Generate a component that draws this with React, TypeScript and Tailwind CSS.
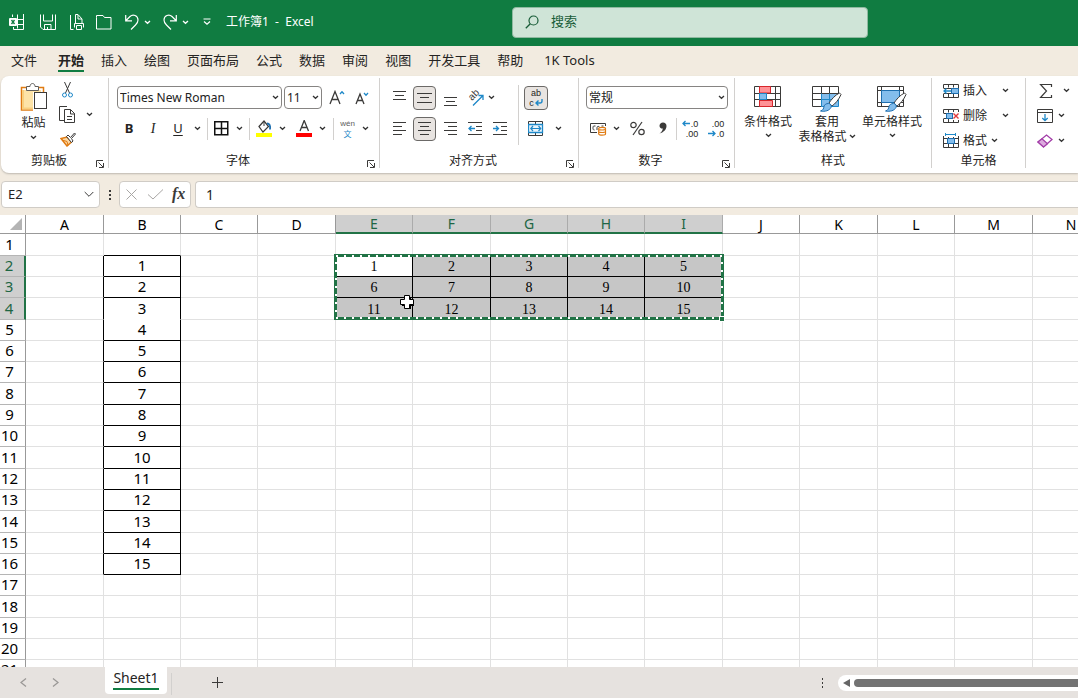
import clsx from "clsx";
import { FC, ReactNode, useState } from "react";

interface IconProps {
  w: number;
  h: number;
  children: ReactNode;
  className?: string;
}

const Icon: FC<IconProps> = ({ w, h, children, className }) => (
  <svg
    width={w}
    height={h}
    viewBox={`0 0 ${w} ${h}`}
    fill="none"
    stroke="#3b3a39"
    className={clsx("shrink-0", className)}
    aria-hidden="true"
  >
    {children}
  </svg>
);

const Chevron: FC<{ color?: string }> = ({ color = "#333" }) => (
  <Icon w={7} h={5}>
    <path d="M1 1l2.5 2.3L6 1" stroke={color} strokeWidth="1.3" />
  </Icon>
);

interface ToolProps {
  label: string;
  className?: string;
  active?: boolean;
  children: ReactNode;
}

const Tool: FC<ToolProps> = ({ label, className, active, children }) => (
  <button
    type="button"
    aria-label={label}
    className={clsx(
      "flex shrink-0 items-center justify-center",
      active && "h-6 rounded border border-[#6b6967] bg-[#e8e4e1]",
      className,
    )}
  >
    {children}
  </button>
);

const Sep: FC<{ className?: string }> = ({ className }) => (
  <div className={clsx("h-[22px] w-px shrink-0 bg-[#d2d0ce]", className)} />
);

const Launcher: FC<{ label: string }> = ({ label }) => (
  <Tool label={label} className="mr-1 self-end">
    <Icon w={8} h={8}>
      <path d="M.5 7V.5H7M2.5 2.5l4.5 4.5M7.5 3v4.5H3" />
    </Icon>
  </Tool>
);

interface GroupProps {
  title: string;
  className: string;
  launcher?: boolean;
  children: ReactNode;
}

const Group: FC<GroupProps> = ({ title, className, launcher, children }) => (
  <section
    aria-label={title}
    className={clsx(
      "flex h-[90px] shrink-0 flex-col border-r border-[#d2d0ce]",
      className,
    )}
  >
    <div className="h-[76px] shrink-0">{children}</div>
    <div className="flex h-[14px] items-center">
      <span className="flex-1 text-center leading-4">{title}</span>
      {launcher && <Launcher label={`${title}设置`} />}
    </div>
  </section>
);

const Combo: FC<{ label: string; value: string; className: string }> = ({
  label,
  value,
  className,
}) => (
  <div className={clsx("relative h-[23px]", className)}>
    <select
      aria-label={label}
      defaultValue={value}
      className="h-full w-full appearance-none rounded border border-[#868482] bg-white pl-0.5 text-xs text-[#222]"
    >
      <option>{value}</option>
    </select>
    <div className="pointer-events-none absolute inset-y-0 right-[3px] flex items-center">
      <Chevron />
    </div>
  </div>
);

const lines = {
  level: "M0 .5h13M2 4.5h9M0 8.5h13",
  left: "M0 .5h13M0 4.5h9M0 8.5h13M0 12.5h9",
  center: "M0 .5h13M2 4.5h9M0 8.5h13M2 12.5h9",
  right: "M0 .5h13M4 4.5h9M0 8.5h13M4 12.5h9",
};

const TitleBar: FC = () => (
  <header className="flex h-[46px] shrink-0 items-center bg-[#107c41] pb-0.5 text-xs text-white">
    <div className="flex w-[47.5%] shrink-0 items-center pl-[9px]">
      <Tool label="Excel">
        <Icon w={15} h={16} className="stroke-white">
          <path d="M3.5 3V.5M8.5 .5v14M14.5 0v15.5h-10V13M3 5.5h11M3 10.5h11" />
          <rect x="0" y="4" width="8" height="8" rx="1" fill="#fff" stroke="none" />
          <path d="M2.5 6l3 4M5.5 6l-3 4" stroke="#107c41" strokeWidth="1.3" />
        </Icon>
      </Tool>
      <Tool label="保存" className="ml-4">
        <Icon w={16} h={16} className="stroke-white">
          <path d="M.5.5V13l2.5 2.5h12.5V.5M3.5.5v6.5h9V.5M4.5 15.5V10.5h6.5v5M7.5 15v-2" />
        </Icon>
      </Tool>
      <Tool label="打印预览" className="ml-[14px]">
        <Icon w={14} h={16} className="stroke-white">
          <path d="M.5 1v14.5h3M5.5 9V.5h2.5L12 5v4M8 1v4h4" />
          <path d="M4.5 13.5v-4h9v4M6.5 11.5h5v4h-5z" />
        </Icon>
      </Tool>
      <Tool label="打开" className="ml-3">
        <Icon w={16} h={15} className="stroke-white">
          <path d="M.5 2.5V14h14.500V2.500H8.500L7 .5H.5z" />
        </Icon>
      </Tool>
      <Tool label="撤消" className="ml-[13px]">
        <Icon w={14} h={16} className="stroke-white">
          <path d="M.7 1v5.8H7M1 6.5L5 2.500C8-.5 13 1.500 13 6c0 2-1 3.500-2.500 5L6 15.500" strokeWidth="1.2" />
        </Icon>
      </Tool>
      <Tool label="撤消列表" className="ml-[5px]">
        <Chevron color="#fff" />
      </Tool>
      <Tool label="恢复" className="ml-3">
        <Icon w={14} h={16} className="stroke-white">
          <path d="M13.300 1v5.800H7M13 6.500L9 2.500C6-.5 1 1.500 1 6c0 2 1 3.500 2.500 5L8 15.500" strokeWidth="1.2" />
        </Icon>
      </Tool>
      <Tool label="恢复列表" className="ml-[5px]">
        <Chevron color="#fff" />
      </Tool>
      <Tool label="自定义快速访问工具栏" className="ml-[14px]">
        <Icon w={8} h={8} className="stroke-white">
          <path d="M.5 1h7M1 3.500L4 6.300l3-2.800" strokeWidth="1.2" />
        </Icon>
      </Tool>
      <h1 className="ml-[15px] whitespace-pre">工作簿1{"  -  "}Excel</h1>
    </div>
    <label className="flex h-[31px] w-[33%] items-center gap-3 rounded-sm border border-[#8fb9a0] bg-[#cfe4d7] px-3 text-[#185c37]">
      <Icon w={14} h={14} className="stroke-[#185c37]">
        <circle cx="8.500" cy="5.500" r="4.500" strokeWidth="1.2" />
        <path d="M5.300 8.700L.8 13.200" strokeWidth="1.3" />
      </Icon>
      <input
        aria-label="搜索"
        placeholder="搜索"
        className="min-w-0 flex-1 text-[13px] placeholder:text-[#185c37] outline-none"
      />
    </label>
  </header>
);

const tabs = [
  "文件",
  "开始",
  "插入",
  "绘图",
  "页面布局",
  "公式",
  "数据",
  "审阅",
  "视图",
  "开发工具",
  "帮助",
  "1K Tools",
];

const Tabs: FC = () => {
  const [current, setCurrent] = useState<string>("开始");

  return (
    <nav className="flex h-[30px] shrink-0 gap-[17px] pl-[11px] text-[13px]">
      {tabs.map((tab) => (
        <button
          key={tab}
          type="button"
          onClick={() => setCurrent(tab)}
          className={clsx(
            "h-[26px] shrink-0 border-b-2 pt-1 leading-5 first:mr-1 last:ml-1",
            tab === current
              ? "border-[#107c41] font-bold"
              : "border-transparent",
          )}
        >
          {tab}
        </button>
      ))}
    </nav>
  );
};

const Clipboard: FC = () => (
  <Group title="剪贴板" className="w-[107px]" launcher>
    <div className="flex">
      <button type="button" className="flex w-[57px] flex-col items-center pt-[5px] pl-1.5">
        <Icon w={28} h={30}>
          <path d="M7 4.500H1.500v22.500H13M19 4.500h4.500V9" stroke="#e07b12" strokeWidth="1.5" />
          <path d="M3.500 7v18.500H13V9h8V7z" fill="#fde3a7" stroke="none" />
          <path d="M3 7v18.500h10" stroke="#f9cf7e" strokeWidth="2" />
          <path d="M6.500 7.500v-4h3.500c0-4 5-4 5 0h3.500v4z" fill="#fff" stroke="#605e5c" />
          <rect x="14.500" y="9.500" width="12" height="16" fill="#fff" />
        </Icon>
        <span className="mt-0.5 mb-1 leading-4">粘贴</span>
        <Chevron />
      </button>
      <div className="flex flex-col">
        <Tool label="剪切" className="h-6 w-[18px]">
          <Icon w={12} h={16}>
            <path d="M2.500 0l5 11M8.500 0l-5 11" />
            <circle cx="2.500" cy="13" r="2" stroke="#1e88c8" />
            <circle cx="8.500" cy="13" r="2" stroke="#1e88c8" />
          </Icon>
        </Tool>
        <div className="flex h-[25px] items-center">
          <Tool label="复制">
            <Icon w={17} h={17}>
              <path d="M5 14.500H.5V.5H8M5.500 3.500h6l4 4v9h-10zM11.500 3.500v4.500H16M8 10.500h5M8 13.500h5" />
            </Icon>
          </Tool>
          <Tool label="复制选项" className="ml-2.5">
            <Chevron />
          </Tool>
        </div>
        <Tool label="格式刷" className="h-[25px] w-[17px]">
          <Icon w={16} h={15}>
            <path d="M1 6.500l6 7.500 4.500-4-4.500-5z" fill="#fbd9a8" stroke="#e07b12" strokeWidth="1.5" />
            <path d="M2 8l5 1.500 1 4" stroke="#e07b12" />
            <path d="M6.500 4.500L8 3l2.500 2.500L14.500 1l1 1-4 4.500L13 9l-1.500 1.500z" fill="#fff" />
          </Icon>
        </Tool>
      </div>
    </div>
  </Group>
);

const FontGroup: FC = () => (
  <Group title="字体" className="w-[271px]" launcher>
    <div className="flex h-[35px] items-center pt-1 pl-2">
      <Combo label="字体" value="Times New Roman" className="w-[165px]" />
      <Combo label="字号" value="11" className="ml-0.5 w-[38px]" />
      <Tool label="增大字号" className="ml-[7px]">
        <Icon w={16} h={15}>
          <path d="M1 14L6 1.500 11 14M2.800 9.500h6.500" strokeWidth="1.3" />
          <path d="M11 4l2-2.300L15 4" stroke="#1e88c8" strokeWidth="1.3" />
        </Icon>
      </Tool>
      <Tool label="减小字号" className="ml-2.5 pt-0.5">
        <Icon w={14} h={13}>
          <path d="M1 12L5 2l4 10M2.500 8.500h5" strokeWidth="1.3" />
          <path d="M9 1l2 2.200L13 1" stroke="#1e88c8" strokeWidth="1.3" />
        </Icon>
      </Tool>
    </div>
    <div className="flex h-[31px] items-center pl-2">
      <Tool label="加粗" className="w-6 text-[13px] font-bold">
        B
      </Tool>
      <Tool label="倾斜" className="w-6 font-['Liberation_Serif',serif] text-sm italic">
        I
      </Tool>
      <Tool label="下划线" className="w-[26px] text-[13px] underline underline-offset-2">
        U
      </Tool>
      <Tool label="下划线选项" className="w-3">
        <Chevron />
      </Tool>
      <Sep className="ml-1" />
      <Tool label="边框" className="ml-[6px]">
        <Icon w={15} h={15} className="stroke-[#111]">
          <path d="M.75.75h13v13h-13zM7.500.5v13.500M.5 7.500H14" strokeWidth="1.5" />
        </Icon>
      </Tool>
      <Tool label="边框选项" className="ml-0.5 w-4">
        <Chevron />
      </Tool>
      <Sep className="ml-0.5" />
      <Tool label="填充颜色" className="w-[27px]">
        <Icon w={16} h={17}>
          <path d="M3 6.500L8 1l4.500 5.500L7 12z" strokeWidth="1.2" />
          <path d="M8 1v5" />
          <path d="M11 3.500c2.500 0 3.500 2 3 6" stroke="#1e6fb0" strokeWidth="1.8" />
          <path d="M0 15h16" stroke="#ff0" strokeWidth="4" />
        </Icon>
      </Tool>
      <Tool label="填充颜色选项" className="w-2.5">
        <Chevron />
      </Tool>
      <Tool label="字体颜色" className="ml-[9px]">
        <Icon w={16} h={17}>
          <path d="M4 11L8.200.5 12.500 11M5.500 7.500h5.500" strokeWidth="1.3" />
          <path d="M0 15h16" stroke="#f00" strokeWidth="4" />
        </Icon>
      </Tool>
      <Tool label="字体颜色选项" className="ml-[5px] w-2.5">
        <Chevron />
      </Tool>
      <Sep className="ml-1.5" />
      <Tool
        label="拼音"
        className="w-[27px] flex-col font-['Liberation_Sans','Noto_Sans_CJK_SC',sans-serif] text-[8px] text-[#605e5c]"
      >
        <span className="leading-[11px]">wén</span>
        <span className="leading-[11px] text-[#1e88c8]">文</span>
      </Tool>
      <Tool label="拼音选项" className="w-2">
        <Chevron />
      </Tool>
    </div>
  </Group>
);

const AlignGroup: FC = () => (
  <Group title="对齐方式" className="w-[199px]" launcher>
    <div className="flex pt-1">
      <div className="flex w-[133px] flex-col pl-1.5">
        <div className="flex h-[31px] items-center">
          <Tool label="顶端对齐" className="w-[27px] pb-1">
            <Icon w={13} h={10}>
              <path d={lines.level} />
            </Icon>
          </Tool>
          <Tool label="垂直居中" className="w-[23px]" active>
            <Icon w={15} h={10}>
              <path d="M0 .5h15M3 4.500h9M0 9.500h15" />
            </Icon>
          </Tool>
          <Tool label="底端对齐" className="w-7 pt-2">
            <Icon w={13} h={10}>
              <path d={lines.level} />
            </Icon>
          </Tool>
          <Tool label="方向" className="w-[22px]">
            <Icon w={18} h={18}>
              <text
                x="6"
                y="12"
                fontSize="10"
                fill="#3b3a39"
                stroke="none"
                transform="rotate(-45 6 12)"
                className="font-['Liberation_Sans',sans-serif]"
              >
                ab
              </text>
              <path d="M7 16.500L17 6.500M12.500 6.500H17V11" stroke="#1e88c8" strokeWidth="1.3" />
            </Icon>
          </Tool>
          <Tool label="方向选项" className="w-2.5">
            <Chevron />
          </Tool>
        </div>
        <div className="flex h-[31px] items-center">
          <Tool label="左对齐" className="w-[27px]">
            <Icon w={13} h={13}>
              <path d={lines.left} />
            </Icon>
          </Tool>
          <Tool label="居中" className="w-[23px]" active>
            <Icon w={13} h={13}>
              <path d={lines.center} />
            </Icon>
          </Tool>
          <Tool label="右对齐" className="w-7">
            <Icon w={13} h={13}>
              <path d={lines.right} />
            </Icon>
          </Tool>
          <Tool label="减少缩进量" className="w-[22px]">
            <Icon w={14} h={13}>
              <path d="M0 .5h14M8 4.500h6M8 8.500h6M0 12.500h14" />
              <path d="M7 6.500H1M3.500 4L1 6.500 3.500 9" stroke="#1e88c8" strokeWidth="1.3" />
            </Icon>
          </Tool>
          <Tool label="增加缩进量" className="w-7">
            <Icon w={14} h={13}>
              <path d="M0 .5h14M8 4.500h6M8 8.500h6M0 12.500h14" />
              <path d="M0 6.500h5.500M3 4l2.500 2.500L3 9" stroke="#1e88c8" strokeWidth="1.3" />
            </Icon>
          </Tool>
        </div>
      </div>
      <div className="mt-[3px] ml-[5px] h-[60px] w-px bg-[#d2d0ce]" />
      <div className="ml-[5px]">
        <div className="flex h-[31px] items-center">
          <Tool
            label="自动换行"
            className="w-6 flex-col font-['Liberation_Sans',sans-serif] text-[9px] leading-[10px]"
            active
          >
            <span>ab</span>
            <span className="flex items-center gap-px">
              c
              <Icon w={8} h={8}>
                <path d="M7 0v2c0 1.500-1 2-2 2H1M3.500 1.500L1 4l2.500 2.500" stroke="#1e88c8" strokeWidth="1.4" />
              </Icon>
            </span>
          </Tool>
        </div>
        <div className="flex h-[31px] items-center">
          <Tool label="合并后居中" className="w-6">
            <Icon w={16} h={16}>
              <path d="M.5.5h14v14H.5zM7.500.5v3M7.500 12v3" />
              <path d="M.5 3.500h14v8H.5z" fill="#eaf5fc" stroke="#1e88c8" strokeWidth="1.3" />
              <path d="M3 7.500h9.500M5 5L2.800 7.500 5 10M10.500 5l2.200 2.500L10.500 10" stroke="#1e88c8" strokeWidth="1.2" />
            </Icon>
          </Tool>
          <Tool label="合并选项" className="w-5">
            <Chevron />
          </Tool>
        </div>
      </div>
    </div>
  </Group>
);

const NumberGroup: FC = () => (
  <Group title="数字" className="w-[156px]" launcher>
    <div className="flex h-[35px] items-center pt-1 pl-[7px]">
      <Combo label="数字格式" value="常规" className="w-[142px]" />
    </div>
    <div className="flex h-[31px] items-center pl-[7px]">
      <Tool label="会计数字格式" className="w-6">
        <Icon w={17} h={14}>
          <path d="M7 10.500H.5v-9h15V4M5.500 4H4C3 4 3 5 3 6s0 2 1.500 2M7 8V5.500C7 4 9.500 4 9.500 5.500M11.500 4h2" />
          <path d="M8.700 6.500c0-1.500 6.800-1.500 6.800 0v5.500c0 1.500-6.800 1.500-6.800 0zM8.700 7c0 1.300 6.800 1.300 6.800 0M8.700 9.500c0 1.300 6.800 1.300 6.800 0" fill="#fff" stroke="#e07b12" strokeWidth="1.2" />
        </Icon>
      </Tool>
      <Tool label="会计数字格式选项" className="w-3">
        <Chevron />
      </Tool>
      <Tool label="百分比样式" className="w-[30px]">
        <Icon w={15} h={15}>
          <circle cx="3.500" cy="4" r="2.700" strokeWidth="1.2" />
          <circle cx="11.500" cy="11" r="2.700" strokeWidth="1.2" />
          <path d="M12 1L3 14" strokeWidth="1.2" />
        </Icon>
      </Tool>
      <Tool label="千位分隔样式" className="w-[22px]">
        <Icon w={8} h={13}>
          <path d="M4 .5C2 .5.500 2 .500 3.700c0 2 1.500 3 3.300 2.800-.2 2-1.300 3.800-3.300 5 4-1 7-4 7-7.500 0-2-1.500-3.500-3.500-3.500z" fill="#3b3a39" stroke="none" />
        </Icon>
      </Tool>
      <Sep className="ml-0.5" />
      <Tool
        label="增加小数位数"
        className="w-[26px] font-['Liberation_Sans',sans-serif] text-[9px] leading-[10px]"
      >
        <span className="flex flex-col items-end">
          <span className="flex items-center gap-px">
            <Icon w={8} h={7}>
              <path d="M8 3.500H1M3.500 1L1 3.500 3.500 6" stroke="#1e88c8" strokeWidth="1.3" />
            </Icon>
            .0
          </span>
          <span>.00</span>
        </span>
      </Tool>
      <Tool
        label="减少小数位数"
        className="w-[26px] font-['Liberation_Sans',sans-serif] text-[9px] leading-[10px]"
      >
        <span className="flex flex-col items-end">
          <span>.00</span>
          <span className="flex items-center gap-px">
            <Icon w={8} h={7}>
              <path d="M0 3.500h7M4.500 1L7 3.500 4.500 6" stroke="#1e88c8" strokeWidth="1.3" />
            </Icon>
            .0
          </span>
        </span>
      </Tool>
    </div>
  </Group>
);

const Brush: FC = () => (
  <>
    <path d="M27.500 7l1.500 1.500c-2 5-6 9.500-9 11.500l-3-3c2-3 6-8 10.500-10z" fill="#fff" />
    <path d="M16.500 17.500c2 0 3.500 2 2.500 4-1.500 3-6 4.500-10.500 3.500 3-1 3-2.500 3.500-4.500s2-3 4.500-3z" fill="#83bdec" stroke="#1e6fb0" />
  </>
);

const StyleGroup: FC = () => (
  <Group title="样式" className="w-[197px]">
    <div className="flex items-start pt-2 pl-[5px] leading-[15px]">
      <button type="button" className="flex w-14 flex-col items-center">
        <Icon w={28} h={28}>
          <path d="M.5.5h26v20H.5zM5.500.5v20M21.500.5v20M.5 7.500h26M.5 13.500h26M12.500 7v7" />
          <path d="M5.500.5h11v6.500h-11zM5.500 14.500h13v6h-13z" fill="#ff9296" stroke="#d8262c" />
          <path d="M5.500 7.500h7v6h-7z" fill="#83bdec" stroke="#1e88c8" />
        </Icon>
        <span>条件格式</span>
        <span className="flex h-[13px] items-center"><Chevron /></span>
      </button>
      <button type="button" className="flex w-[62px] flex-col items-center">
        <Icon w={30} h={28}>
          <path d="M9 7h18v13.500H9z" fill="#83bdec" stroke="none" />
          <path d="M26.500 8V.5H.5v20H9M9.500.5v20M17.500.5v20M.5 7.500h26M.5 13.500h26" />
          <path d="M9.500 7.500v13h17v-13M17.500 7.500v13M9.500 13.500h17" stroke="#1e88c8" />
          <Brush />
        </Icon>
        <span>套用</span>
        <span className="flex items-center gap-0.5 whitespace-nowrap">表格格式 <Chevron /></span>
      </button>
      <button type="button" className="flex w-[68px] flex-col items-center whitespace-nowrap">
        <Icon w={30} h={28}>
          <path d="M.5.5h26v20H.5zM4.500.5v20M22.500.5v20M.5 4.500h26M.5 16.500h26" />
          <path d="M4.500 4.500h18v12h-18z" fill="#83bdec" stroke="#1e6fb0" />
          <Brush />
        </Icon>
        <span>单元格样式</span>
        <span className="flex h-[13px] items-center"><Chevron /></span>
      </button>
    </div>
  </Group>
);

const cellGrid = "M.5 4V.5h15v13H.5V10M5.500.5v3M10.500.5v3M5.500 10v3.500M10.500 10v3.500M.5 4.500h15M.5 9.500h15";

const CellsGroup: FC = () => (
  <Group title="单元格" className="w-[94px]">
    <div className="flex flex-col pl-[11px]">
      <button type="button" className="flex h-[25px] items-center gap-1">
        <Icon w={16} h={14}>
          <path d={cellGrid} />
          <path d="M8.500 4.500h7v5h-7z" fill="#83bdec" stroke="#1e6fb0" />
          <path d="M0 5h8v4H0z" fill="#fff" stroke="none" />
          <path d="M8 7H1M3.500 4.500L1 7l2.500 2.500" stroke="#1e88c8" strokeWidth="1.3" />
        </Icon>
        <span className="mr-[11px]">插入</span>
        <Chevron />
      </button>
      <button type="button" className="flex h-[25px] items-center gap-1">
        <Icon w={16} h={14}>
          <path d={cellGrid} />
          <path d="M3.500 4.500h6v5h-6z" fill="#83bdec" stroke="#1e6fb0" />
          <path d="M10 3h6v8h-6z" fill="#fff" stroke="none" />
          <path d="M10.500 4.500l5 5M15.500 4.500l-5 5" stroke="#e03a3e" strokeWidth="1.4" />
        </Icon>
        <span className="mr-[11px]">删除</span>
        <Chevron />
      </button>
      <button type="button" className="flex h-[25px] items-center gap-1">
        <Icon w={16} h={15}>
          <path d="M.5 3v11.500h15V3M5.500 4v10.500M10.500 4v10.500M.5 5.500h15M.5 10.500h15" />
          <path d="M4.500 5.500h7v5h-7z" fill="#83bdec" stroke="#1e6fb0" />
          <path d="M3 1.500h10M2.500 0v3M12.500 0v3" stroke="#1e88c8" />
        </Icon>
        <span>格式</span>
        <Chevron />
      </button>
    </div>
  </Group>
);

const EditTools: FC = () => (
  <div className="flex shrink-0 flex-col pl-[11px]">
    <div className="flex h-[25px] items-center">
      <Tool label="自动求和" className="ml-0.5">
        <Icon w={14} h={14}>
          <path d="M12.500 3V.5h-11L7.500 7l-6 6.500h11V11" strokeWidth="1.2" />
        </Icon>
      </Tool>
      <Tool label="求和选项" className="ml-2.5">
        <Chevron />
      </Tool>
    </div>
    <div className="flex h-[25px] items-center">
      <Tool label="填充">
        <Icon w={16} h={14}>
          <path d="M.5.5h15v13H.5zM.5 3.500h15" />
          <path d="M8 5v6.500M5.300 9L8 11.700 10.700 9" stroke="#1e88c8" strokeWidth="1.3" />
        </Icon>
      </Tool>
      <Tool label="填充选项" className="ml-[5px]">
        <Chevron />
      </Tool>
    </div>
    <div className="flex h-[25px] items-center">
      <Tool label="清除">
        <Icon w={16} h={14}>
          <path d="M1 8l8.500-7L15 5.500 6.500 13z" fill="#fff" stroke="#a33ea8" strokeWidth="1.3" />
          <path d="M1 8l4-3.200 5.500 5L6.500 13z" fill="#dcaade" stroke="#a33ea8" strokeWidth="1.3" />
        </Icon>
      </Tool>
      <Tool label="清除选项" className="ml-[5px]">
        <Chevron />
      </Tool>
    </div>
  </div>
);

const Ribbon: FC = () => (
  <div className="ml-px flex h-[97px] shrink-0 overflow-hidden rounded-l-lg bg-white pt-0.5 pl-px text-xs shadow-[0_1px_2px_#bdb8b0]">
    <Clipboard />
    <FontGroup />
    <AlignGroup />
    <NumberGroup />
    <StyleGroup />
    <CellsGroup />
    <EditTools />
  </div>
);

const FormulaBar: FC = () => (
  <div className="mt-2 flex h-[27px] shrink-0 pl-px text-[13px]">
    <div className="flex w-[99px] items-center rounded border border-[#d0ccc6] bg-white pr-[5px]">
      <input aria-label="名称框" defaultValue="E2" className="min-w-0 flex-1 pl-1.5 outline-none" />
      <Icon w={10} h={7}>
        <path d="M.7 1L5 5.300 9.300 1" />
      </Icon>
    </div>
    <div className="flex w-[19px] items-center justify-center">
      <Icon w={2} h={10}>
        <path d="M1 0v2M1 4v2M1 8v2" strokeWidth="2" />
      </Icon>
    </div>
    <div className="flex w-[72px] items-center rounded border border-[#d0ccc6] bg-white pl-1.5">
      <Tool label="取消">
        <Icon w={11} h={11} className="stroke-[#a8a6a4]">
          <path d="M.5.5l10 10M10.500.5l-10 10" />
        </Icon>
      </Tool>
      <Tool label="输入" className="ml-2.5">
        <Icon w={17} h={11} className="stroke-[#a8a6a4]">
          <path d="M1 5.500L6 10 16 .5" />
        </Icon>
      </Tool>
      <Tool
        label="插入函数"
        className="ml-2 pb-0.5 font-['Liberation_Serif',serif] text-base leading-5 font-bold text-[#3b3a39] italic"
      >
        fx
      </Tool>
    </div>
    <input
      aria-label="编辑栏"
      defaultValue="1"
      className="ml-1 min-w-0 flex-1 rounded-l border border-r-0 border-[#d0ccc6] bg-white pl-[10px] text-sm outline-none"
    />
  </div>
);

const columns = "ABCDEFGHIJKLMN".split("");
const wideColumns = "ADFIKM";
const tallRows = [1, 4, 8, 11, 14, 18];
const rows = Array.from({ length: 21 }, (_, i) => i + 1);

const inTarget = (col: number, row: number) =>
  col >= 4 && col <= 8 && row >= 2 && row <= 4;

const cellValue = (col: number, row: number) => {
  if (col === 1 && row >= 2 && row <= 16) return row - 1;
  if (inTarget(col, row)) return (row - 2) * 5 + col - 3;
  return null;
};

const bottomBorder = (col: number, row: number) => {
  // B4 has no line under it, 3 and 4 share one box
  if (col === 1 && row === 4) return "border-b-white";
  if (col === 1 && row <= 16) return "border-b-black";
  if (inTarget(col, row) && row < 4) return "border-b-black";
  return "border-b-[#e1e1e1]";
};

const cellClass = (col: number, row: number) => {
  const target = inTarget(col, row);
  const inList = row >= 2 && row <= 16;
  const darkRight = (col <= 1 && inList) || (target && col < 8);

  return clsx(
    "overflow-hidden border-r border-b p-0 text-center leading-4",
    darkRight ? "border-r-black" : "border-r-[#e1e1e1]",
    bottomBorder(col, row),
    target
      ? "pt-0.5 font-['Liberation_Serif',serif] text-sm"
      : "pb-0.5 text-[15px]",
    target && !(col === 4 && row === 2) && "bg-[#c6c6c6]",
  );
};

const Sheet: FC = () => (
  <main className="relative mt-[7px] min-h-0 flex-1 overflow-hidden bg-white">
    <table className="w-[1110px] table-fixed border-separate border-spacing-0 text-black">
      <colgroup>
        <col className="w-[26px]" />
        {columns.map((name) => (
          <col
            key={name}
            className={wideColumns.includes(name) ? "w-[78px]" : "w-[77px]"}
          />
        ))}
      </colgroup>
      <thead>
        <tr className="h-[19px]">
          <th className="border-r border-b border-[#999] p-0">
            <Icon w={12} h={12} className="mr-[3px] ml-auto">
              <path d="M12 0v12H0z" fill="#b4b4b4" stroke="none" />
            </Icon>
          </th>
          {columns.map((name, col) => (
            <th
              key={name}
              scope="col"
              className={clsx(
                "border-r p-0 text-sm leading-4 font-normal",
                col >= 4 && col <= 8
                  ? "border-b-2 border-r-[#ababab] border-b-[#217346] bg-[#cfcfcf] pt-px text-[#1e6644]"
                  : "border-b border-[#999] pt-0.5",
              )}
            >
              {name}
            </th>
          ))}
        </tr>
      </thead>
      <tbody>
        {rows.map((row) => (
          <tr
            key={row}
            className={tallRows.includes(row) ? "h-[22px]" : "h-[21px]"}
          >
            <th
              scope="row"
              className={clsx(
                "border-b border-b-[#b5b5b5] p-0 pr-1.5 pb-0.5 text-center text-[15px] leading-4 font-normal",
                row >= 2 && row <= 4
                  ? "border-r-2 border-r-[#217346] bg-[#cfcfcf] text-[#1e6644]"
                  : "border-r border-r-[#999]",
              )}
            >
              {row}
            </th>
            {columns.map((name, col) => (
              <td key={name} className={cellClass(col, row)}>
                {cellValue(col, row)}
              </td>
            ))}
          </tr>
        ))}
      </tbody>
    </table>

    {/* copy marquee around E2:I4 */}
    <svg
      width="392"
      height="68"
      fill="none"
      className="pointer-events-none absolute top-[39px] left-[334px]"
      aria-hidden="true"
    >
      <rect x="1.500" y="1.500" width="387" height="63" stroke="#217346" strokeWidth="3" />
      <rect x="2" y="2" width="386" height="62" stroke="#fff" strokeWidth="2" strokeDasharray="2 6" />
      <rect x="385.500" y="62.500" width="5" height="5" fill="#217346" stroke="#fff" />
    </svg>

    {/* mouse pointer */}
    <svg
      width="15"
      height="15"
      className="pointer-events-none absolute top-[80px] left-[400px]"
      aria-hidden="true"
    >
      <path d="M5 2h6v3h3v6h-3v3H5v-3H2V5h3z" fill="#000" />
      <path d="M4.500.5h5v4h4v5h-4v4h-5v-4h-4v-5h4z" fill="#fff" stroke="#000" />
    </svg>
  </main>
);

const StatusBar: FC = () => (
  <footer className="flex h-[31px] shrink-0 bg-[#e6e2df]">
    <div className="flex w-[105px] items-center pl-5">
      <Tool label="上一个工作表">
        <Icon w={7} h={9} className="stroke-[#9a9896]">
          <path d="M6 .5l-5 4 5 4" strokeWidth="1.3" />
        </Icon>
      </Tool>
      <Tool label="下一个工作表" className="ml-[25px]">
        <Icon w={7} h={9} className="stroke-[#9a9896]">
          <path d="M1 .5l5 4-5 4" strokeWidth="1.3" />
        </Icon>
      </Tool>
    </div>
    <button type="button" className="h-[27px] w-[62px] rounded-b bg-white px-2 pb-1 text-sm">
      <span className="block border-b-2 border-[#107c41] leading-[21px]">Sheet1</span>
    </button>
    <Sep className="mt-1.5 ml-1 h-4" />
    <Tool label="新建工作表" className="ml-10">
      <Icon w={12} h={12}>
        <path d="M5.500 0v11M0 5.500h11" />
      </Icon>
    </Tool>
    <div className="ml-auto flex w-[257px] items-center">
      <Icon w={2} h={10}>
        <path d="M1.500 0v2M1.500 4v2M1.500 8v2" />
      </Icon>
      <div className="ml-[15px] flex h-4 flex-1 items-center rounded-l-full bg-white pl-[5px]">
        <Icon w={7} h={8}>
          <path d="M7 0v8L0 4z" fill="#666" stroke="none" />
        </Icon>
        <div className="ml-1 h-2 flex-1 rounded-l-full bg-[#737373]" />
      </div>
    </div>
  </footer>
);

export default function App() {
  return (
    <div className="flex h-screen flex-col overflow-hidden bg-[#f2ebe0] font-['Noto_Sans','Noto_Sans_CJK_SC',sans-serif] text-[#252423]">
      <TitleBar />
      <Tabs />
      <Ribbon />
      <FormulaBar />
      <Sheet />
      <StatusBar />
    </div>
  );
}
